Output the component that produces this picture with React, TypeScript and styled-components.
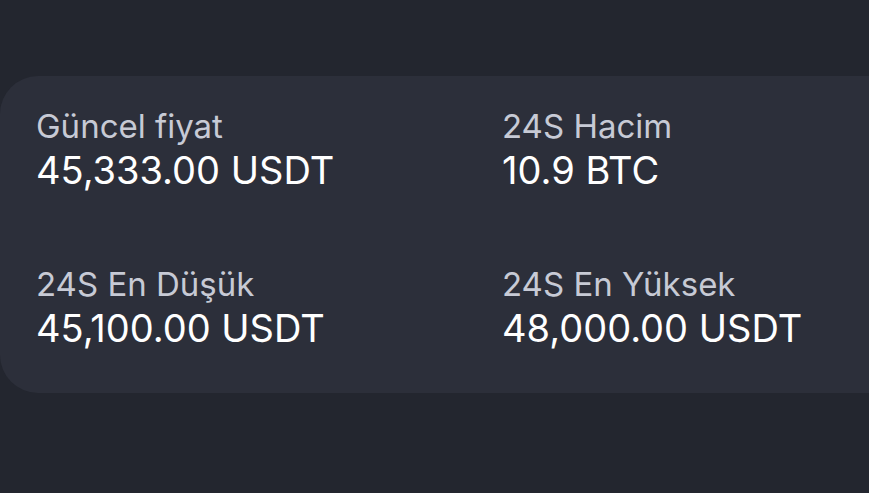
import React from "react";
import styled, { createGlobalStyle } from "styled-components";

const Global = createGlobalStyle`
  html, body { margin: 0; padding: 0; background: #23262f; overflow: hidden; }
  body { width: 869px; height: 493px; font-family: Inter, "Noto Sans", sans-serif; }
`;

const Page = styled.div`
  padding-top: 76px;
  height: 493px;
  box-sizing: border-box;
  overflow: hidden;
`;

const Card = styled.section`
  width: 960px;
  height: 317px;
  box-sizing: border-box;
  background: #2c2f3a;
  border-radius: 38px;
  padding: 30px 0 0 36px;
  display: grid;
  grid-template-columns: 466px 466px;
  grid-auto-rows: 158px;
`;

const Stat = styled.div`
  display: flex;
  flex-direction: column;
`;

const Label = styled.div`
  color: #c7cad5;
  font-size: 33px;
  line-height: 40px;
  font-weight: 400;
`;

const Value = styled.div`
  color: #ffffff;
  font-size: 38px;
  line-height: 48px;
  font-weight: 400;
`;

const stats = [
  { label: "Güncel fiyat", value: "45,333.00 USDT" },
  { label: "24S Hacim", value: "10.9 BTC" },
  { label: "24S En Düşük", value: "45,100.00 USDT" },
  { label: "24S En Yüksek", value: "48,000.00 USDT" },
];

export default function App() {
  return (
    <>
      <Global />
      <Page>
        <Card>
          {stats.map((s) => (
            <Stat key={s.label}>
              <Label>{s.label}</Label>
              <Value>{s.value}</Value>
            </Stat>
          ))}
        </Card>
      </Page>
    </>
  );
}
